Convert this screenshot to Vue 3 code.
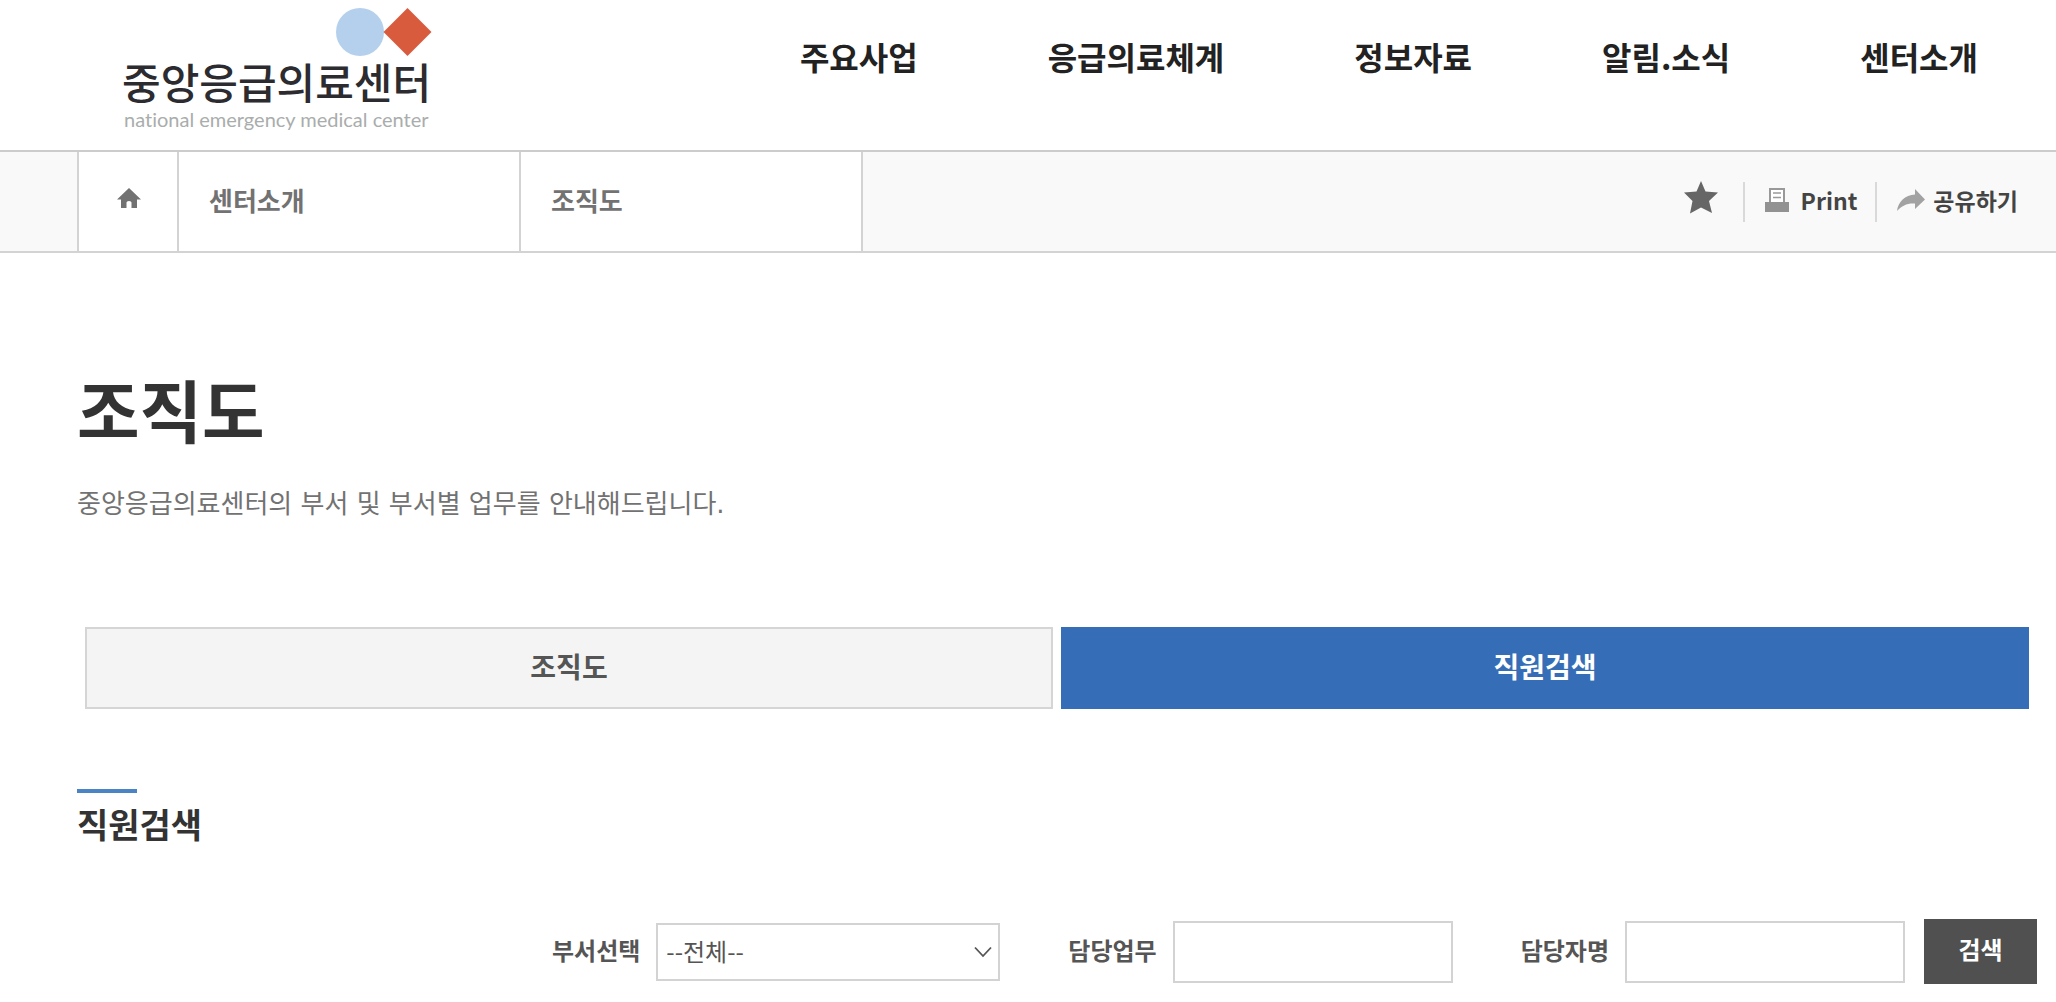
<script setup>
import { ref } from 'vue'

const menus = ['주요사업', '응급의료체계', '정보자료', '알림.소식', '센터소개']
const tabs = ['조직도', '직원검색']
const activeTab = ref('직원검색')
const department = ref('')
const duty = ref('')
const person = ref('')
</script>

<template>
  <div class="page">
    <header class="header">
      <a class="logo" href="#" aria-label="중앙응급의료센터">
        <svg class="logo-mark" width="96" height="48" viewBox="0 0 96 48" aria-hidden="true">
          <circle cx="24" cy="24" r="24" fill="#b4d0ed" />
          <path d="M71.500 0 95.500 24 71.500 48 47.500 24z" fill="#d85b3e" />
        </svg>
        <span class="logo-ko">중앙응급의료센터</span>
        <span class="logo-en">national emergency medical center</span>
      </a>
      <nav class="menu">
        <a v-for="menu in menus" :key="menu" href="#">{{ menu }}</a>
      </nav>
    </header>

    <div class="location">
      <nav class="crumbs">
        <a class="crumb home" href="#" aria-label="홈">
          <svg width="24" height="20" viewBox="0 0 24 20" aria-hidden="true">
            <path d="M12 0 24 11.500H20V20H14.500V14.500Q14.500 13 12 13T9.500 14.500V20H4V11.500H0z" fill="#727272" />
          </svg>
        </a>
        <a class="crumb" href="#">센터소개</a>
        <a class="crumb" href="#">조직도</a>
      </nav>
      <div class="tools">
        <button class="tool star" type="button" aria-label="즐겨찾기">
          <svg width="34" height="33" viewBox="0 0 34 33" aria-hidden="true">
            <path d="M17 0 21.500 10.500 34 11.500 25 20 28 32 17 26.500 6 32.500 8.500 20 0 11.500 12.500 10.500z" fill="#666" />
          </svg>
        </button>
        <button class="tool print" type="button">
          <svg width="24" height="24" viewBox="0 0 24 24" aria-hidden="true">
            <path d="M5 14V1H19V14" fill="#fff" stroke="#999" stroke-width="2" />
            <path d="M8 5H16M8 9.500H16" stroke="#999" stroke-width="1.500" />
            <path d="M0 14H24V24H0z" fill="#929292" />
          </svg>
          Print
        </button>
        <button class="tool share" type="button">
          <svg width="28" height="22" viewBox="0 0 28 22" aria-hidden="true">
            <path d="M18 0 28 10.500 18 20V14.500C10 14 5 16.500 0 22 1 13 8 6 18 5.500z" fill="#a2a2a2" />
          </svg>
          공유하기
        </button>
      </div>
    </div>

    <main class="content">
      <h1>조직도</h1>
      <p class="lead">중앙응급의료센터의 부서 및 부서별 업무를 안내해드립니다.</p>

      <div class="tabs">
        <button
          v-for="tab in tabs"
          :key="tab"
          type="button"
          class="tab"
          :class="{ active: tab === activeTab }"
          @click="activeTab = tab"
        >{{ tab }}</button>
      </div>

      <h2>직원검색</h2>

      <form class="search" @submit.prevent>
        <div class="field">
          <label for="department">부서선택</label>
          <div class="select-wrap">
            <select id="department" v-model="department">
              <option value="">--전체--</option>
            </select>
            <svg class="chevron" width="18" height="12" viewBox="0 0 18 12" aria-hidden="true">
              <path d="M1 1.500 9 10 17 1.500" fill="none" stroke="#555" stroke-width="1.800" />
            </svg>
          </div>
        </div>
        <div class="field">
          <label for="duty">담당업무</label>
          <input id="duty" v-model="duty" type="text">
        </div>
        <div class="field">
          <label for="person">담당자명</label>
          <input id="person" v-model="person" type="text">
        </div>
        <button class="submit" type="submit">검색</button>
      </form>
    </main>
  </div>
</template>

<style>
body {
  margin: 0;
  background: #fff;
}
</style>

<style scoped>
.page,
.page * {
  box-sizing: border-box;
}

.page {
  color: #333;
  font-family: "Noto Sans CJK KR", "Noto Sans", sans-serif;
}

a {
  color: inherit;
  text-decoration: none;
}

button,
input,
select {
  margin: 0;
  border-radius: 0;
  font-family: inherit;
}

button {
  cursor: pointer;
}

.header {
  display: flex;
  justify-content: space-between;
  height: 150px;
  padding: 8px 78px 0 122px;
}

.logo {
  display: flex;
  flex-direction: column;
  width: 310px;
}

.logo-mark {
  align-self: flex-end;
}

.logo-ko {
  margin-top: 4px;
  color: #2b2b30;
  font-family: "Liberation Sans", "Noto Sans CJK KR", sans-serif;
  font-size: 42px;
  font-weight: 500;
  line-height: 50px;
  white-space: nowrap;
}

.logo-en {
  padding-left: 2px;
  color: #a9adac;
  font-family: Lato, sans-serif;
  font-size: 20px;
  font-variant-ligatures: none;
  line-height: 18px;
  white-space: nowrap;
}

.menu {
  display: flex;
  gap: 130px;
  padding-top: 24px;
  color: #222;
  font-size: 32px;
  font-weight: 700;
  line-height: 48px;
  white-space: nowrap;
}

.location {
  display: flex;
  justify-content: space-between;
  height: 103px;
  padding: 0 38px 0 77px;
  border-top: 2px solid #ccc;
  border-bottom: 2px solid #d3d3d3;
  background: #f9f9f9;
}

.crumbs {
  display: flex;
  border-left: 2px solid #d3d3d3;
}

.crumb {
  display: flex;
  align-items: center;
  width: 342px;
  padding: 0 30px 4px;
  border-right: 2px solid #d3d3d3;
  background: #fff;
  color: #727272;
  font-size: 26px;
  font-weight: 700;
}

.home {
  justify-content: center;
  width: 100px;
  padding: 0 28px 8px 30px;
}

.tools {
  display: flex;
  align-items: center;
}

.tool {
  display: flex;
  align-items: center;
  height: 40px;
  padding: 0 0 4px 20px;
  border: 0;
  background: none;
  color: #444;
  font-size: 23px;
  font-weight: 700;
}

.tool + .tool {
  border-left: 2px solid #d9d9d9;
}

.star {
  padding: 0 25px 8px 0;
}

.print {
  gap: 12px;
  padding-right: 18px;
}

.share {
  gap: 8px;
}

.content {
  padding: 106px 19px 18px 77px;
}

h1 {
  margin: 0;
  font-size: 68px;
  line-height: 100px;
}

.lead {
  margin: 24px 0 0;
  color: #727272;
  font-family: "DejaVu Sans", "Noto Sans CJK KR", sans-serif;
  font-size: 26px;
  line-height: 42px;
}

.tabs {
  display: flex;
  gap: 8px;
  margin: 102px 8px 0;
}

.tab {
  flex: 1;
  height: 82px;
  padding: 0 0 4px;
  border: 2px solid #d5d5d5;
  background: #f4f4f4;
  color: #555;
  font-size: 28px;
  font-weight: 700;
}

.tab.active {
  border-color: #356eb6;
  background: #356eb6;
  color: #fff;
}

h2 {
  margin: 80px 0 0;
  font-size: 34px;
  line-height: 50px;
}

h2::before {
  display: block;
  width: 60px;
  height: 4px;
  margin-bottom: 6px;
  background: #4a84c4;
  content: "";
}

.search {
  display: flex;
  justify-content: flex-end;
  align-items: center;
  margin-top: 70px;
}

.field {
  display: flex;
  align-items: center;
  gap: 16px;
  margin-right: 68px;
}

.field:nth-last-child(2) {
  margin-right: 19px;
}

label {
  padding-bottom: 4px;
  color: #555;
  font-size: 24px;
  font-weight: 700;
}

input {
  width: 280px;
  height: 62px;
  padding: 0 10px;
  border: 2px solid #d3d3d3;
  background: #fff;
  color: #555;
  font-size: 24px;
}

.select-wrap {
  position: relative;
}

select {
  display: block;
  width: 344px;
  height: 58px;
  padding: 0 40px 2px 8px;
  border: 2px solid #d3d3d3;
  appearance: none;
  background: #fff;
  color: #555;
  font-size: 24px;
}

.chevron {
  position: absolute;
  top: 23px;
  right: 8px;
  pointer-events: none;
}

.submit {
  width: 113px;
  height: 65px;
  padding: 0 0 6px;
  border: 0;
  background: #505050;
  color: #fff;
  font-size: 24px;
  font-weight: 700;
}
</style>
